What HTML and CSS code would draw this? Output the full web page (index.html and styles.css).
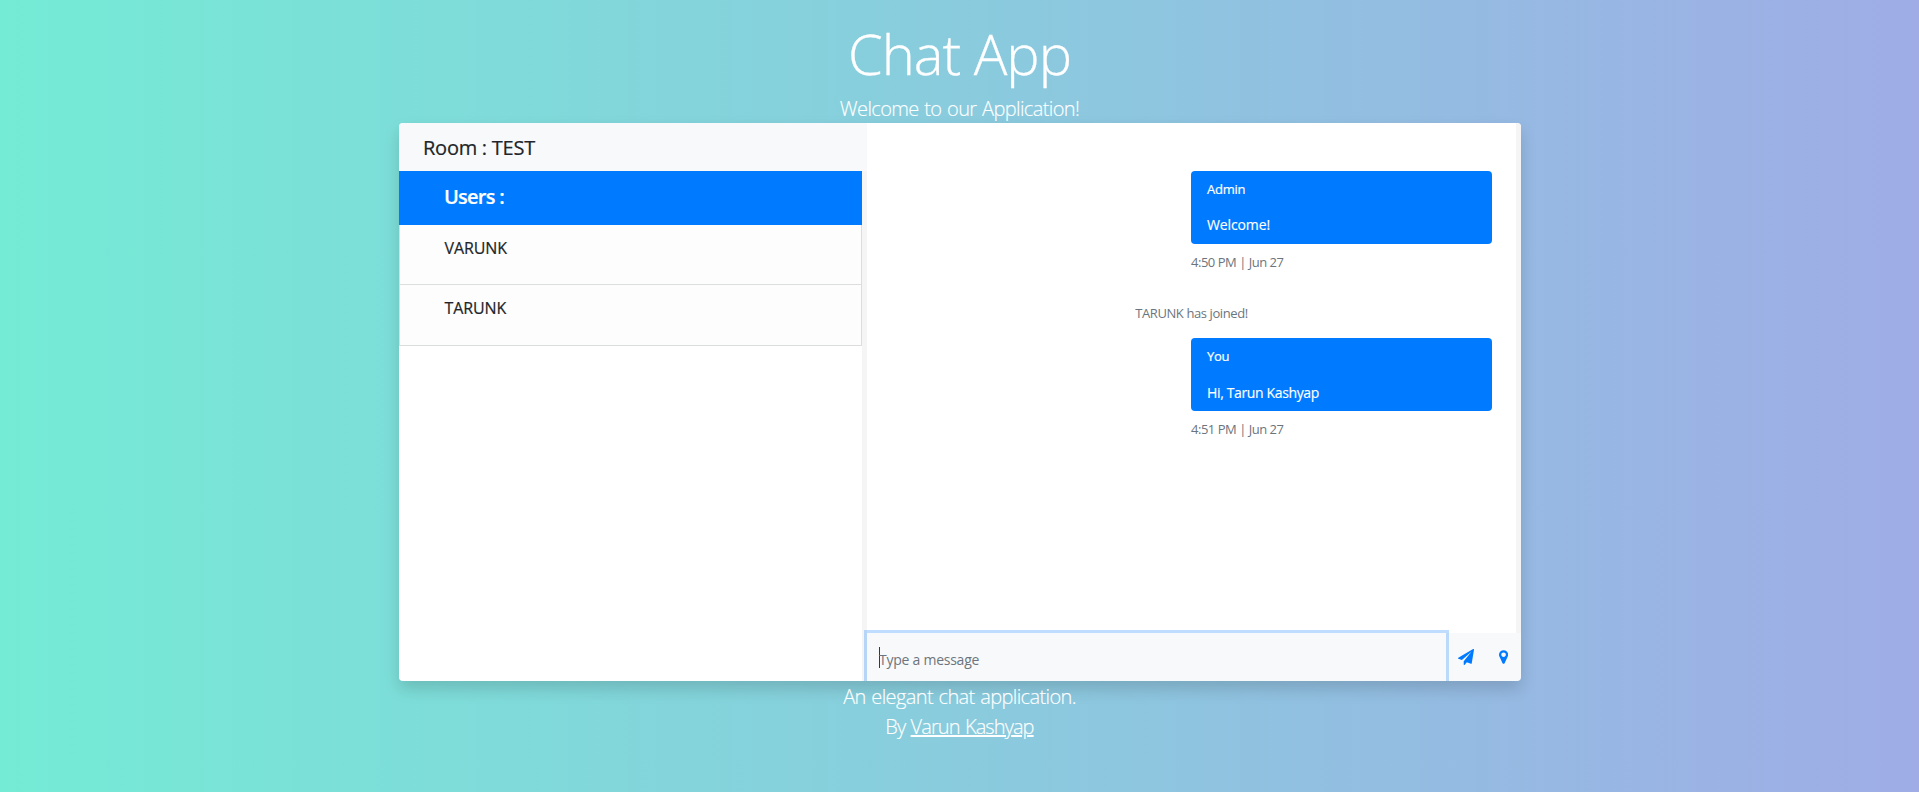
FILE: index.html
```html
<!DOCTYPE html>
<html lang="en">
<head>
<meta charset="utf-8">
<title>Chat App</title>
<link rel="stylesheet" href="styles.css">
</head>
<body>
<header class="intro">
  <h1 class="title"><span>Chat App</span></h1>
  <p class="lead welcome">Welcome to our Application!</p>
</header>
<main class="chat">
  <section class="sidebar">
    <div class="room">Room : TEST</div>
    <div class="users">
      <ul class="user-list">
        <li class="user heading">Users :</li>
        <li class="user">VARUNK</li>
        <li class="user last">TARUNK</li>
      </ul>
      <div class="track"></div>
    </div>
  </section>
  <section class="conversation">
    <div class="scroll">
      <div class="messages">
        <article class="message">
          <div class="bubble"><p class="sender">Admin</p><p class="text">Welcome!</p></div>
          <p class="time">4:50 PM | Jun 27</p>
        </article>
        <p class="notice">TARUNK has joined!</p>
        <article class="message">
          <div class="bubble"><p class="sender">You</p><p class="text reply">Hi, Tarun Kashyap</p></div>
          <p class="time">4:51 PM | Jun 27</p>
        </article>
      </div>
      <div class="track"></div>
    </div>
    <form class="composer">
      <div class="field"><span class="caret"></span><span class="placeholder">Type a message</span></div>
      <div class="actions">
        <svg class="plane" viewBox="0 0 1792 1792"><path d="M1764 11q33 24 27 64l-256 1536q-5 29-32 45-14 8-31 8-11 0-24-5l-453-185-242 295q-18 23-49 23-13 0-22-4-19-7-30.500-23.500t-11.500-36.500v-349l864-1059-1069 925-395-162q-37-14-40-55-2-40 32-59l1664-960q15-9 32-9 20 0 36 11z"/></svg>
        <svg class="pin" viewBox="0 0 1024 1792"><path d="M768 640q0-106-75-181t-181-75-181 75-75 181 75 181 181 75 181-75 75-181zm256 0q0 109-33 179l-364 774q-16 33-47.500 52t-67.500 19-67.500-19-46.500-52l-365-774q-33-70-33-179 0-212 150-362t362-150 362 150 150 362z"/></svg>
      </div>
    </form>
  </section>
</main>
<footer class="credits">
  <p class="lead about">An elegant chat application.</p>
  <p class="lead author">By <a class="link">Varun Kashyap</a></p>
</footer>
</body>
</html>
```
FILE: styles.css
```css
* { box-sizing: border-box; }
body {
  margin: 0;
  height: 792px;
  overflow: hidden;
  font-family: "Open Sans", "Noto Sans", sans-serif;
  color: #212529;
  background: linear-gradient(to right, #74ebd5 0%, #9face6 100%);
}
h1, p, ul { margin: 0; padding: 0; }
.intro { height: 123px; padding-top: 19px; text-align: center; color: #fff; }
.title { height: 75px; line-height: 68px; font-size: 56px; font-weight: 300; letter-spacing: -1px; -webkit-text-stroke: 0.3px #fff; }
.lead { height: 30px; line-height: 30px; font-size: 20px; font-weight: 300; letter-spacing: -0.62px; word-spacing: 1px; -webkit-text-stroke: 0.15px #fff; }
.chat {
  display: grid;
  grid-template-columns: 468px 654px;
  width: 1122px;
  height: 558px;
  margin-left: 399px;
  border-radius: 4px;
  box-shadow: 0 8px 16px rgba(0, 0, 0, .15);
}
.sidebar { display: flex; flex-direction: column; overflow: hidden; background: #fff; border-radius: 4px 0 0 4px; }
.room { height: 48px; padding-left: 24px; line-height: 50px; background: #f8f9fa; font-size: 20px; letter-spacing: -0.25px; -webkit-text-stroke: 0.2px #212529; }
.users, .scroll { display: flex; flex: 1; }
.user-list { flex: 1; list-style: none; }
.track { width: 5px; background: #f5f5f5; }
.user {
  height: 59px;
  padding-left: 44.5px;
  line-height: 46px;
  background: #fdfdfd;
  border: 1px solid #dcdddd;
  border-top: 0;
  font-size: 16px;
  letter-spacing: -0.1px;
  -webkit-text-stroke: 0.2px #212529;
}
.user.heading { height: 54px; padding-left: 45px; line-height: 52px; border: 0; background: #007bff; color: #fff; font-size: 20px; font-weight: 600; letter-spacing: -0.75px; -webkit-text-stroke: 0.2px #fff; }
.user:nth-child(2) { height: 60px; }
.user.last { height: 61px; }
.conversation { display: flex; flex-direction: column; }
.scroll { height: 510px; flex: none; background: #fff; overflow: hidden; border-radius: 0 4px 0 0; }
.messages { flex: 1; padding: 48px 24px; }
.message { width: 301px; margin-left: auto; }
.bubble { height: 73px; padding: 7px 16px; border-radius: 4px; background: #007bff; color: #fff; font-size: 14px; }
.sender { height: 36px; line-height: 22px; font-size: 13px; letter-spacing: -0.25px; -webkit-text-stroke: 0.2px #fff; }
.text { line-height: 22px; letter-spacing: -0.12px; -webkit-text-stroke: 0.15px #fff; }
.reply { line-height: 24px; letter-spacing: -0.36px; }
.time { margin-top: 9px; height: 19px; line-height: 19px; color: #6c757d; font-size: 13px; letter-spacing: -0.48px; }
.notice { margin: 32px 0 15px; height: 19px; line-height: 19px; text-align: center; color: #6c757d; font-size: 13px; letter-spacing: -0.4px; }
.composer { display: flex; height: 48px; background: #f8f9fa; border-radius: 0 0 4px 0; }
.field {
  display: flex;
  align-items: center;
  width: 579px;
  padding: 2px 0 0 12px;
  background: #f8f9fa;
  box-shadow: 0 0 0 3px rgba(0, 123, 255, .25);
  clip-path: inset(-3px -3px 0 -3px);
  color: #6c757d;
  font-size: 14px;
}
.caret { width: 1px; height: 21px; margin: -1px -1px 0 0; background: #343a40; }
.placeholder { line-height: 22px; padding-top: 3px; letter-spacing: -0.25px; }
.actions { display: flex; flex: 1; padding: 16px 13px 0 12px; justify-content: space-between; }
.actions svg { height: 16px; fill: #007bff; }
.plane { width: 16px; }
.pin { width: 9.14px; }
.credits { padding-top: 1px; text-align: center; color: #fff; }
.author { letter-spacing: -0.9px; }
.link { color: #fff; text-decoration: underline; }
```
